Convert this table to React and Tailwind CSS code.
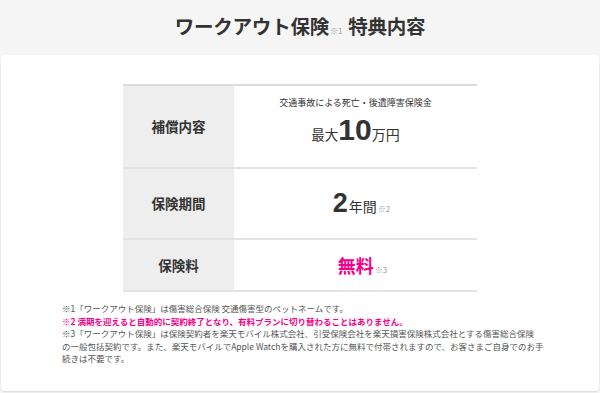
import React from "react";

const font = { fontFamily: '"Noto Sans CJK JP", "Noto Sans", sans-serif' };
const num = { fontFamily: '"Liberation Sans", Arial, sans-serif' };

export default function App() {
  return (
    <div className="w-[600px] h-[393px] bg-[#f5f5f5] overflow-hidden text-[#333]" style={font}>
      <div className="h-[55px] flex items-center justify-center pb-[4px]">
        <h1 className="text-[19.5px] font-bold leading-none flex items-baseline tracking-[-0.2px]">
          <span>ワークアウト保険</span>
          <span className="text-[8px] font-normal text-[#999] ml-[1px] mr-[6px]">※1</span>
          <span>特典内容</span>
        </h1>
      </div>
      <div className="mx-px h-[336px] bg-white rounded-[4px] shadow-[0_1px_2px_rgba(0,0,0,0.12)] pt-[29px]">
        <div className="w-[354px] mx-auto border-t-2 border-[#dcdcdc]">
          <div className="flex h-[83px] border-b-2 border-[#e3e3e3]">
            <div className="w-[111px] bg-[#eeeeee] flex items-center justify-center text-[13.5px] font-bold">補償内容</div>
            <div className="flex-1 flex flex-col items-center justify-center">
              <div className="text-[9px] leading-none mt-[-10px]">交通事故による死亡・後遺障害保険金</div>
              <div className="flex items-baseline leading-none mt-[8px]">
                <span className="text-[13.5px]">最大</span>
                <span className="text-[30px] font-bold leading-none" style={num}>10</span>
                <span className="text-[14px]">万円</span>
              </div>
            </div>
          </div>
          <div className="flex h-[71px] border-b-2 border-[#e3e3e3]">
            <div className="w-[111px] bg-[#eeeeee] flex items-center justify-center text-[13.5px] font-bold">保険期間</div>
            <div className="flex-1 flex items-center justify-center pl-[12px]">
              <div className="flex items-baseline leading-none">
                <span className="text-[27px] font-bold leading-none" style={num}>2</span>
                <span className="text-[14px] ml-[1px]">年間</span>
                <span className="text-[8px] text-[#999] ml-[1px]">※2</span>
              </div>
            </div>
          </div>
          <div className="flex h-[52px] border-b-2 border-[#e3e3e3]">
            <div className="w-[111px] bg-[#eeeeee] flex items-center justify-center text-[13.5px] font-bold">保険料</div>
            <div className="flex-1 flex items-center justify-center pl-[14px]">
              <div className="flex items-baseline leading-none">
                <span className="text-[18px] font-bold text-[#f5008a]">無料</span>
                <span className="text-[8px] text-[#999] ml-[1px]">※3</span>
              </div>
            </div>
          </div>
        </div>
        <div className="pl-[61px] mt-[10px] text-[8.5px] leading-[12.5px] text-[#555] whitespace-nowrap">
          <div>※1「ワークアウト保険」は傷害総合保険 交通傷害型のペットネームです。</div>
          <div className="text-[#f5008a] font-bold">※2 満期を迎えると自動的に契約終了となり、有料プランに切り替わることはありません。</div>
          <div>
            ※3「ワークアウト保険」は保険契約者を楽天モバイル株式会社、引受保険会社を楽天損害保険株式会社とする傷害総合保険
            <br />
            の一般包括契約です。また、楽天モバイルでApple Watchを購入された方に無料で付帯されますので、お客さまご自身でのお手
            <br />
            続きは不要です。
          </div>
        </div>
      </div>
    </div>
  );
}
